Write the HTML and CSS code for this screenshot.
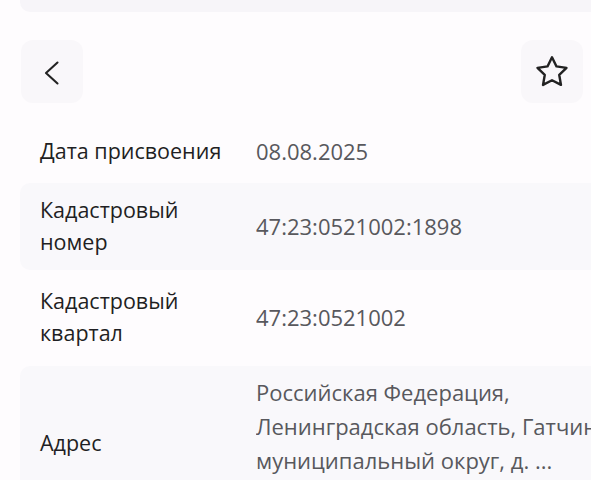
FILE: index.html
```html
<!DOCTYPE html>
<html lang="ru">
<head>
<meta charset="utf-8">
<link rel="stylesheet" href="styles.css">
</head>
<body>
<div class="page">
  <div class="topbar"></div>
  <div class="toolbar">
    <button class="icon-btn" aria-label="Назад">
      <svg width="28" height="28" viewBox="0 0 28 28" fill="none" stroke="#222" stroke-width="2.1" stroke-linecap="round" stroke-linejoin="round"><path d="M19.5 4.5 8 15l11.5 10.5"/></svg>
    </button>
    <button class="icon-btn" aria-label="В избранное">
      <svg width="40" height="40" viewBox="0 0 24 24" fill="none" stroke="#222" stroke-width="1.45" stroke-linejoin="round"><path d="M12 3.2l2.7 5.45 6 .88-4.35 4.23 1.03 5.98L12 16.92l-5.38 2.82 1.03-5.98L3.3 9.53l6-.88z"/></svg>
    </button>
  </div>
  <div class="list">
    <div class="row r1">
      <div class="label">Дата присвоения</div>
      <div class="value">08.08.2025</div>
    </div>
    <div class="row shaded r2">
      <div class="label">Кадастровый<br>номер</div>
      <div class="value">47:23:0521002:1898</div>
    </div>
    <div class="row r3">
      <div class="label">Кадастровый<br>квартал</div>
      <div class="value">47:23:0521002</div>
    </div>
    <div class="row shaded r4">
      <div class="label">Адрес</div>
      <div class="value addr">Российская Федерация,<br>Ленинградская область, Гатчинский<br>муниципальный округ, д. ...</div>
    </div>
  </div>
</div>
</body>
</html>
```
FILE: styles.css
```css
html, body {
  margin: 0;
  padding: 0;
  background: #fefcfe;
}
body {
  font-family: "Open Sans", "Noto Sans", sans-serif;
  overflow: hidden;
}
.page {
  width: 591px;
  height: 480px;
  overflow: hidden;
}
.topbar {
  height: 12px;
  margin-left: 20px;
  background: #f7f5f9;
  border-bottom-left-radius: 10px;
}
.toolbar {
  display: flex;
  justify-content: space-between;
  padding: 28px 8px 0 21px;
}
.icon-btn {
  width: 62px;
  height: 63px;
  border: none;
  border-radius: 12px;
  background: #f9f7fa;
  display: flex;
  align-items: center;
  justify-content: center;
  padding: 0;
}
.list {
  margin-top: 20px;
  margin-left: 20px;
}
.row {
  display: grid;
  grid-template-columns: 216px 1fr;
  align-items: center;
  padding-left: 20px;
  white-space: nowrap;
}
.row.shaded {
  background: #f9f8fb;
  border-radius: 10px 0 0 10px;
}
.r1 { height: 56px; padding-bottom: 4px; }
.r2 { height: 85px; padding-bottom: 2px; }
.r3 { height: 94px; padding-bottom: 2px; }
.label {
  font-size: 21.5px;
  line-height: 32px;
  color: #1f1f23;
}
.value {
  font-size: 22px;
  line-height: 32px;
  color: #58585d;
  overflow: hidden;
}
.value.addr {
  line-height: 34px;
  padding: 9px 0 43px;
}
```
